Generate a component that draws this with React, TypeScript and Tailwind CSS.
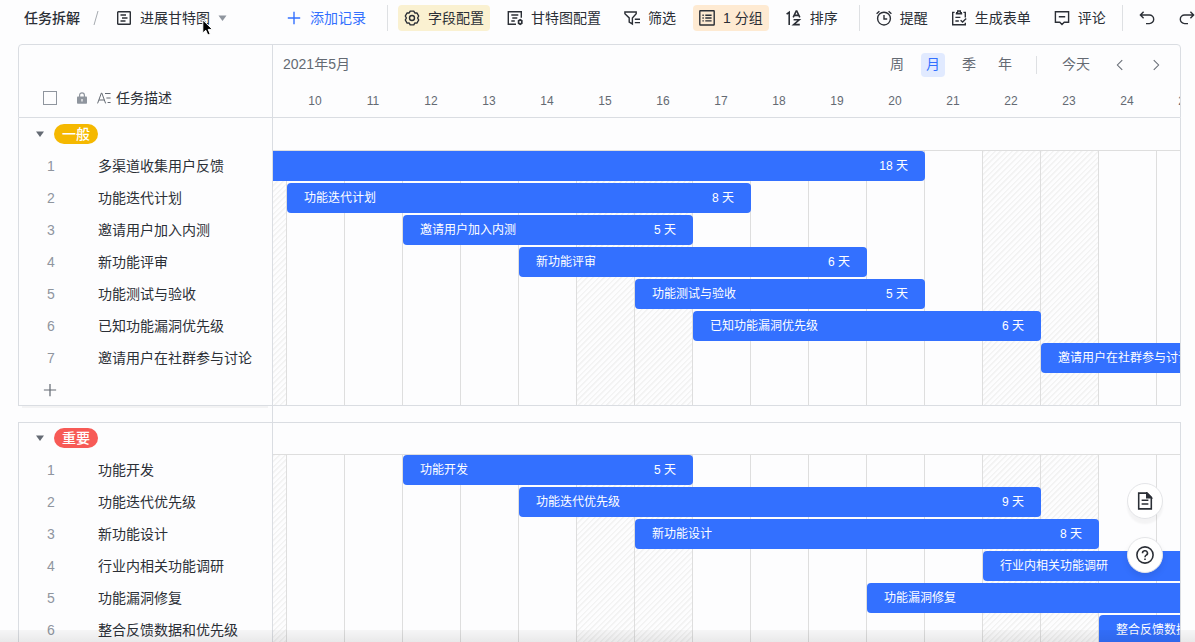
import React from "react";

type Task = { name: string; start: number; days: number };

// start is the day of the month, the first fully visible day is the 10th
const FIRST_DAY = 10;
const LAST_DAY = 25;
const days = [10, 11, 12, 13, 14, 15, 16, 17, 18, 19, 20, 21, 22, 23, 24, 25];
const weekends = [9, 15, 16, 22, 23];

const normalTasks: Task[] = [
  { name: "多渠道收集用户反馈", start: 3, days: 18 },
  { name: "功能迭代计划", start: 10, days: 8 },
  { name: "邀请用户加入内测", start: 12, days: 5 },
  { name: "新功能评审", start: 14, days: 6 },
  { name: "功能测试与验收", start: 16, days: 5 },
  { name: "已知功能漏洞优先级", start: 17, days: 6 },
  { name: "邀请用户在社群参与讨论", start: 23, days: 5 },
];

const importantTasks: Task[] = [
  { name: "功能开发", start: 12, days: 5 },
  { name: "功能迭代优先级", start: 14, days: 9 },
  { name: "新功能设计", start: 16, days: 8 },
  { name: "行业内相关功能调研", start: 22, days: 6 },
  { name: "功能漏洞修复", start: 20, days: 8 },
  { name: "整合反馈数据和优先级", start: 24, days: 5 },
];

const columns = "grid grid-cols-[14px_repeat(20,58px)]";

const Icon = ({ children, className = "w-4 h-4" }: { children: React.ReactNode; className?: string }) => (
  <svg
    viewBox="0 0 16 16"
    fill="none"
    stroke="currentColor"
    strokeWidth="1.4"
    className={`shrink-0 ${className}`}
    aria-hidden="true"
  >
    {children}
  </svg>
);

const GanttIcon = () => (
  <Icon>
    <rect x="1.7" y="1.7" width="12.6" height="12.6" rx="0.6" />
    <path d="M4.5 5h5.500M6 8h5.5M4.5 11h5" />
  </Icon>
);

const GearIcon = () => (
  <Icon>
    <path
      d="M6.2 1.1h3.6l1 1.9 2.1-.1 1.8 3.1L13.6 8l1.1 2-1.8 3.1-2.1-.1-1 1.9H6.2l-1-1.9-2.1.1L1.3 10l1.1-2-1.1-2 1.8-3.1 2.1.1z"
      strokeLinejoin="round"
    />
    <circle cx="8" cy="8" r="2.5" />
  </Icon>
);

const GanttSettingIcon = () => (
  <Icon>
    <path d="M9 14.3H1.3V1.7h13v6M4.3 5h7M5.3 8h5M4.3 11h3.5" />
    <path d="M13.2 9.8l1.6 1v2.4l-1.6 1-1.6-1v-2.4z" strokeWidth="1.7" />
  </Icon>
);

const FilterIcon = () => (
  <Icon>
    <path d="M.9 2h11.3v1.8L8.4 7.9v6L5.2 12V7.9L.9 3.8zM10.8 9.2H16M10.8 12.6H16" />
  </Icon>
);

const GroupIcon = () => (
  <Icon>
    <rect x="0.8" y="0.8" width="14.4" height="14.2" rx="0.5" />
    <path d="M3.4 5.2h1.4M6.3 5.2h6.3M3.4 8h1.4M6.3 8h6.3M3.4 10.9h1.4M6.3 10.9h6.3" />
  </Icon>
);

const SortIcon = () => (
  <Icon>
    <path d="M0.6 4.2 3.2 2.3V15M7.2 7.4 10.2 1h.6l3 6.4M8.2 5.4h4.6M7.6 9.8h5.6l-5.6 4.8h6.2" strokeWidth="1.6" />
  </Icon>
);

const AlarmIcon = () => (
  <Icon>
    <circle cx="8" cy="8.6" r="6.4" />
    <path d="M8 5v4h3.2M.6 3.8 3.4 1.2M15.4 3.8l-2.8-2.6" />
  </Icon>
);

const FormIcon = () => (
  <Icon>
    <path d="M3.6 2.4H1.7v12.4h12.6v-2M12.4 2.4h1.9v5M4.800 3.800h6.400M5 2.600h1.700V1h2.600v1.600H11M4.4 7.4h5M4.4 11h3.4M9.6 10.2l2 1.8 3.6-3.4" />
  </Icon>
);

const CommentIcon = () => (
  <Icon>
    <path d="M1.4 1.8h13.2v10.4h-4.4L8 14.400l-2.2-2.200H1.4zM4.8 6.800h6.400" />
  </Icon>
);

const UndoIcon = ({ className = "w-4 h-4" }: { className?: string }) => (
  <Icon className={className}>
    <path d="M4.6 1.8 1.4 5l3.2 3.2M1.4 5h9a4.3 4.3 0 0 1 0 8.6H7" />
  </Icon>
);

const CaretDown = ({ className }: { className: string }) => (
  <svg viewBox="0 0 8 6" fill="currentColor" className={className} aria-hidden="true">
    <path d="M0 0.4h8L4 6z" />
  </svg>
);

function ToolButton({ icon, children, tone = "" }: { icon: React.ReactNode; children: React.ReactNode; tone?: string }) {
  return (
    <button type="button" className={`flex h-[26px] shrink-0 items-center gap-2 rounded px-1.5 whitespace-nowrap ${tone}`}>
      {icon}
      <span>{children}</span>
    </button>
  );
}

function Toolbar() {
  return (
    <header className="flex h-9 shrink-0 items-center overflow-hidden pl-6 text-[14px]">
      {/* breadcrumb */}
      <nav className="flex shrink-0 items-center whitespace-nowrap">
        <a href="#table" className="font-medium">任务拆解</a>
        <svg viewBox="0 0 6 14" className="mx-[13px] h-[14px] w-[6px] text-[#a6aab0]" stroke="currentColor" aria-hidden="true">
          <path d="M5 0 1 14" />
        </svg>
        <button type="button" className="ml-1 flex items-center gap-2">
          <GanttIcon />
          <span>进展甘特图</span>
          <CaretDown className="h-[6px] w-[9px] text-[#8f959e]" />
        </button>
      </nav>

      <button type="button" className="ml-[59px] flex shrink-0 items-center gap-2 whitespace-nowrap text-[#3370ff]">
        <Icon>
          <path d="M8 1.8v12.4M1.8 8h12.4" />
        </Icon>
        添加记录
      </button>
      <span className="ml-[21px] h-[26px] w-px shrink-0 bg-[#dee0e3]" />

      <div className="ml-2.5 flex shrink-0 gap-[11px]">
        <ToolButton icon={<GearIcon />} tone="bg-[#faf1d1]">字段配置</ToolButton>
        <ToolButton icon={<GanttSettingIcon />}>甘特图配置</ToolButton>
        <ToolButton icon={<FilterIcon />}>筛选</ToolButton>
        <ToolButton icon={<GroupIcon />} tone="bg-[#feead2]">1 分组</ToolButton>
        <ToolButton icon={<SortIcon />}>排序</ToolButton>
      </div>
      <span className="ml-[15px] h-[26px] w-px shrink-0 bg-[#dee0e3]" />

      <div className="ml-2.5 flex shrink-0 gap-[11px]">
        <ToolButton icon={<AlarmIcon />}>提醒</ToolButton>
        <ToolButton icon={<FormIcon />}>生成表单</ToolButton>
        <ToolButton icon={<CommentIcon />}>评论</ToolButton>
      </div>
      <span className="ml-2.5 h-[26px] w-px shrink-0 bg-[#dee0e3]" />

      <button type="button" aria-label="撤销" className="ml-4 shrink-0">
        <UndoIcon />
      </button>
      <button type="button" aria-label="重做" className="ml-6 shrink-0">
        <UndoIcon className="h-4 w-4 -scale-x-100" />
      </button>
    </header>
  );
}

function TableHead() {
  return (
    <div className="flex rounded-t border border-[#dadde2]">
      <div className="flex w-[254px] shrink-0 items-end border-r border-[#dadde2] pb-[7px]">
        <label className="flex h-6 items-center pl-6">
          <input
            type="checkbox"
            aria-label="全选"
            className="h-[14px] w-[14px] appearance-none border border-[#8f959e]"
          />
        </label>
        <div className="ml-5 flex h-6 items-center">
          <svg viewBox="0 0 10 12" className="h-3 w-[10px] text-[#8f959e]" aria-hidden="true">
            <path d="M2.6 5V3.2a2.4 2.4 0 0 1 4.8 0V5" fill="none" stroke="currentColor" strokeWidth="1.2" />
            <rect y="4.6" width="10" height="7.2" rx="0.8" fill="currentColor" />
            <path d="M5 7v2.4" stroke="#fff" strokeWidth="1.2" />
          </svg>
          <svg
            viewBox="0 0 14 12"
            fill="none"
            stroke="currentColor"
            className="ml-2.5 h-3 w-[14px] text-[#646a73]"
            aria-hidden="true"
          >
            <path d="M.6 11.4 4.4 1h.4l3.8 10.4M2 8h5.2M8 1.5h5.6M9.4 6h4.2M10.6 10.5h3" />
          </svg>
          <span className="ml-[5px] text-[14px]">任务描述</span>
        </div>
      </div>

      <div className="min-w-0 flex-1 overflow-hidden text-[#646a73]">
        <div className="flex h-[39px] items-center pl-2.5 pr-[18px] text-[14px]">
          <span>2021年5月</span>
          <div className="ml-auto flex items-center gap-3">
            <button type="button" className="h-6 w-6">周</button>
            <button type="button" className="h-6 w-6 rounded bg-[#e1eaff] text-[#3370ff]">月</button>
            <button type="button" className="h-6 w-6">季</button>
            <button type="button" className="h-6 w-6">年</button>
          </div>
          <span className="ml-[19px] h-[18px] w-px bg-[#dee0e3]" />
          <button type="button" className="ml-[25px]">今天</button>
          <button type="button" aria-label="上一页" className="ml-6">
            <Icon className="h-3 w-3">
              <path d="M11 1.5 4.5 8l6.5 6.5" />
            </Icon>
          </button>
          <button type="button" aria-label="下一页" className="ml-6">
            <Icon className="h-3 w-3">
              <path d="M5 1.5 11.5 8 5 14.5" />
            </Icon>
          </button>
        </div>
        <div className={`${columns} h-[33px] items-center text-center text-[12px]`}>
          <span />
          {days.map((day) => (
            <span key={day} className="pr-0.5">{day}</span>
          ))}
        </div>
      </div>
    </div>
  );
}

function GanttBar({ task }: { task: Task }) {
  const offset = task.start - FIRST_DAY;
  const from = offset < 0 ? 1 : offset + 2;
  const to = offset + task.days + 2;

  return (
    <div
      className={`my-px flex min-w-0 items-center bg-[#3370ff] px-[17px] text-[12px] whitespace-nowrap text-white ${
        offset < 0 ? "rounded-r" : "rounded"
      }`}
      style={{ gridColumn: `${from} / ${to}` }}
    >
      {offset >= 0 && <span>{task.name}</span>}
      {task.start + task.days <= LAST_DAY && <span className="ml-auto">{task.days} 天</span>}
    </div>
  );
}

function Group({ title, color, tasks, withAdd }: { title: string; color: string; tasks: Task[]; withAdd?: boolean }) {
  return (
    <section className="flex">
      {/* task list */}
      <div className="w-[255px] shrink-0 border-x border-[#dadde2]">
        <div className="flex h-8 items-center">
          <button type="button" aria-label="折叠" className="ml-[17px]">
            <CaretDown className="h-[6px] w-2 text-[#646a73]" />
          </button>
          <span className={`ml-2.5 flex h-5 items-center rounded-full px-2 text-[14px] font-medium text-white ${color}`}>
            {title}
          </span>
        </div>
        {tasks.map((task, index) => (
          <div key={task.name} className="flex h-8 items-center text-[14px]">
            <span className="w-16 text-center text-[#8f959e]">{index + 1}</span>
            <span className="ml-[15px] whitespace-nowrap">{task.name}</span>
          </div>
        ))}
        {withAdd && (
          <button type="button" aria-label="添加" className="flex h-[31px] items-center pl-6 text-[#646a73]">
            <Icon className="h-[14px] w-[14px]">
              <path d="M8 1v14M1 8h14" />
            </Icon>
          </button>
        )}
      </div>

      {/* timeline */}
      <div className="flex min-w-0 flex-1 flex-col overflow-hidden border-r border-[#dadde2]">
        <div className="h-8 shrink-0" />
        <div className="grid flex-1">
          <div className={`${columns} col-start-1 row-start-1 border-t border-[#dedede]`}>
            {[9, ...days].map((day) => (
              <div
                key={day}
                className={`border-r border-[#dedede] ${
                  weekends.includes(day)
                    ? "bg-[repeating-linear-gradient(135deg,#f3f3f3_0px,#f3f3f3_1px,transparent_2px,transparent_4px)]"
                    : ""
                }`}
              />
            ))}
          </div>
          <div className="col-start-1 row-start-1">
            {tasks.map((task) => (
              <div key={task.name} className={`${columns} h-8`}>
                <GanttBar task={task} />
              </div>
            ))}
          </div>
        </div>
      </div>
    </section>
  );
}

export default function App() {
  return (
    <div className="relative flex h-screen flex-col overflow-hidden bg-[#fdfdfe] font-['Liberation_Sans','Noto_Sans_CJK_SC',sans-serif] text-[#2b2f36]">
      <Toolbar />

      <main className="mt-2 mr-[14px] ml-[18px] min-h-0 flex-1 overflow-hidden">
        <TableHead />
        <Group title="一般" color="bg-[#f5b800]" tasks={normalTasks} withAdd />
        {/* space between the groups, its lower line is shared with the next one */}
        <div className="-mb-px flex h-[18px] border-y border-[#dadde2]">
          <div className="w-[255px] border-r border-[#dadde2]">
            <div className="mx-1 h-[2px] bg-[#f3f3f4]" />
          </div>
        </div>
        <Group title="重要" color="bg-[#f75a56]" tasks={importantTasks} />
      </main>

      <div className="pointer-events-none absolute inset-x-0 bottom-0 h-3 bg-linear-to-b from-black/3 to-black/8" />

      {/* floating buttons */}
      <div className="absolute right-8 bottom-[69px] flex flex-col gap-[18px]">
        <button
          type="button"
          aria-label="文档"
          className="flex h-9 w-9 items-center justify-center rounded-full border border-[#e4e5e8] bg-white shadow-[0_5px_2px_rgba(0,0,0,0.04)]"
        >
          <Icon className="h-[18px] w-[18px]">
            <path d="M2.4 1h7.4l3.8 3.8V15H2.4zM5 7.4h6M5 10.6h6" />
            <path d="M9.6 1v4h4z" fill="currentColor" />
          </Icon>
        </button>
        <button
          type="button"
          aria-label="帮助"
          className="flex h-9 w-9 items-center justify-center rounded-full border border-[#e4e5e8] bg-white shadow-[0_4px_6px_rgba(0,0,0,0.08)]"
        >
          <Icon className="h-[18px] w-[18px]">
            <circle cx="8" cy="8" r="7.2" />
            <path d="M5.8 6.4a2.2 2.1 0 1 1 3.3 1.7C8.3 8.6 8 8.9 8 9.9M8 11v1.5" />
          </Icon>
        </button>
      </div>

      {/* pointer */}
      <svg viewBox="0 0 12 18" className="pointer-events-none absolute top-[19px] left-[202px] h-[18px] w-3" aria-hidden="true">
        <path d="M.8 1v13l3-2.8 2 4.8 2.4-1-2-4.6h4.2z" fill="#000" stroke="#fff" />
      </svg>
    </div>
  );
}
